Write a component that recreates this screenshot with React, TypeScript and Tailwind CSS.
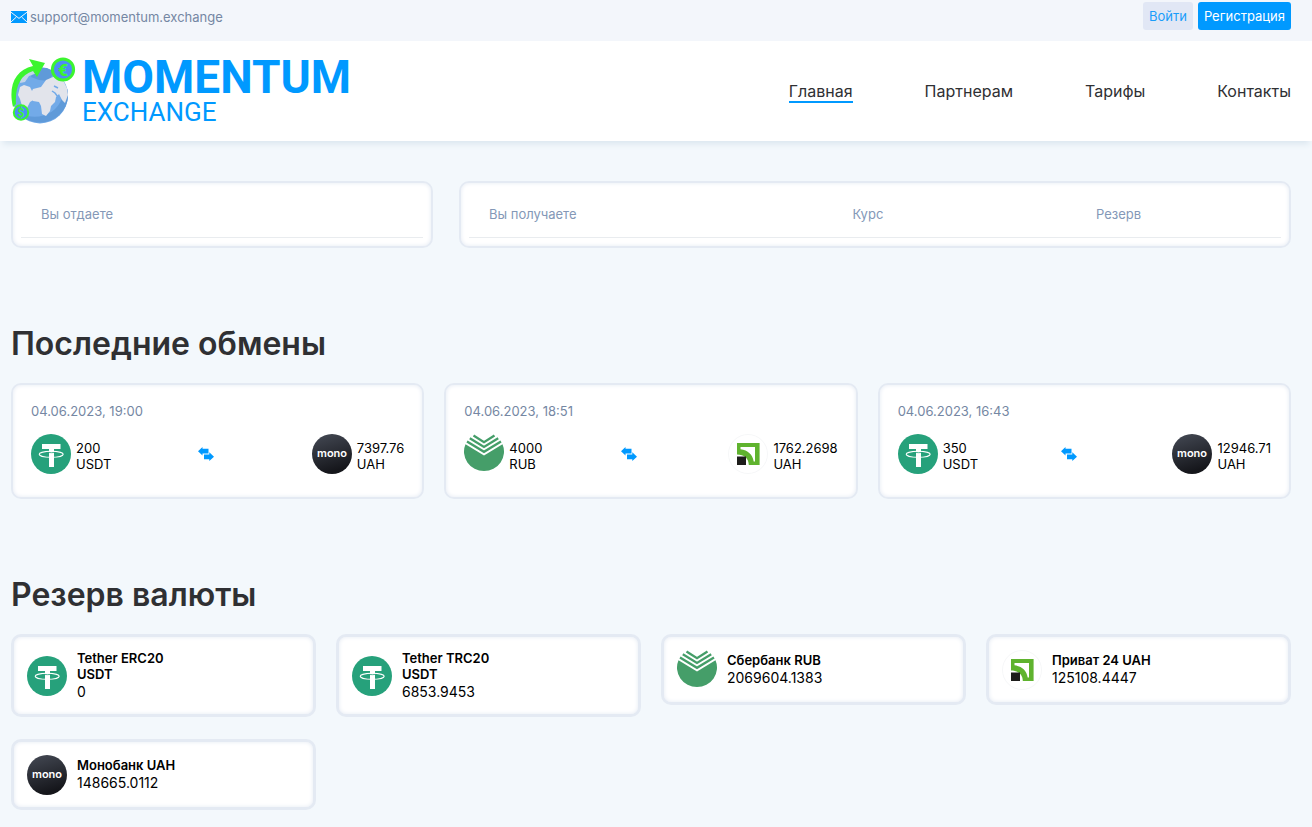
import type { ReactNode } from "react";

type Coin = "tether" | "mono" | "sber" | "privat";

type Exchange = {
    date: string;
    from: { coin: Coin; amount: string; currency: string };
    to: { coin: Coin; amount: string; currency: string };
};

type Reserve = {
    coin: Coin;
    name: string[];
    amount: string;
};

const navLinks = ["Главная", "Партнерам", "Тарифы", "Контакты"];

const exchanges: Exchange[] = [
    {
        date: "04.06.2023, 19:00",
        from: { coin: "tether", amount: "200", currency: "USDT" },
        to: { coin: "mono", amount: "7397.76", currency: "UAH" },
    },
    {
        date: "04.06.2023, 18:51",
        from: { coin: "sber", amount: "4000", currency: "RUB" },
        to: { coin: "privat", amount: "1762.2698", currency: "UAH" },
    },
    {
        date: "04.06.2023, 16:43",
        from: { coin: "tether", amount: "350", currency: "USDT" },
        to: { coin: "mono", amount: "12946.71", currency: "UAH" },
    },
];

const reserves: Reserve[] = [
    { coin: "tether", name: ["Tether ERC20", "USDT"], amount: "0" },
    { coin: "tether", name: ["Tether TRC20", "USDT"], amount: "6853.9453" },
    { coin: "sber", name: ["Сбербанк RUB"], amount: "2069604.1383" },
    { coin: "privat", name: ["Приват 24 UAH"], amount: "125108.4447" },
    { coin: "mono", name: ["Монобанк UAH"], amount: "148665.0112" },
];

function MailIcon() {
    return (
        <svg width="16" height="12" viewBox="0 0 16 12" aria-hidden="true">
            <rect width="16" height="12" fill="#0099ff" />
            <path d="M0 1.2 8 7.4l8-6.2M0 11l5.4-5M16 11l-5.4-5" fill="none" stroke="#f3f6fb" strokeWidth="1" />
        </svg>
    );
}

function ArrowsIcon() {
    return (
        <svg className="mr-3 shrink-0" width="16" height="16" viewBox="0 0 16 16" aria-hidden="true">
            <path d="M0 5.300 4.500 1v1.700h6v4.800h-6v2.100z" fill="#0099ff" />
            <path d="M16 10.700 11.300 6.300v2.200H6v4.700h5.300V15z" fill="#0099ff" />
        </svg>
    );
}

function GlobeLogo() {
    return (
        <svg width="66" height="68" viewBox="0 0 66 68" aria-hidden="true">
            <circle cx="29" cy="38.500" r="28" fill="#72aae8" />
            <path d="M57 36a28 28 0 0 1-49 20c18 9 38 1 43-15 1-6 0-11-2-16 5 2 8 6 8 11z" fill="#5f9ad9" />
            <path d="m24 10 12 1 8 4-7 9-9-1-8-3z" fill="#5f9ad9" />
            <path d="M10 19c4-4 9-7 15-8l1 5-8 3-4 6-5 1z" fill="#c3d4e8" />
            <path d="m9 30 4-2 6 2 2 4 5 3-2 5-5 3-3 6-5-2-2-7-2-4z" fill="#e2e4eb" />
            <path d="m30 30 5-7 7-3 6-2 4 5 4 8 1 7-3 8-3-3-3-6-3 3-1 5-4 4-1 5-4 5-4-2-1-8-2-4-6-1-3-6 3-6z" fill="#e2e4eb" />
            <path d="m41 34 3 2 3 4M43 29l4 2" fill="none" stroke="#72aae8" strokeWidth="1.500" />
            <path d="M2 50C-3 29 4 13 22 9l-4-7 16 4-8 14-4-6C9 18 4 30 5 47z" fill="#3cf52f" />
            <circle cx="52" cy="12.500" r="10.600" fill="#4d8df5" stroke="#3cf52f" strokeWidth="3" />
            <text x="52" y="18.500" textAnchor="middle" fontFamily="Roboto, sans-serif" fontSize="17" fontWeight="900" fill="#3cf52f">€</text>
            <circle cx="10" cy="55.500" r="7.200" fill="#4d8df5" stroke="#3cf52f" strokeWidth="2" />
            <text x="10" y="60" textAnchor="middle" fontFamily="Roboto, sans-serif" fontSize="12" fontWeight="700" fill="#3cf52f">$</text>
        </svg>
    );
}

function CoinIcon({ coin }: { coin: Coin }) {
    const art: Record<Coin, ReactNode> = {
        tether: (
            <>
                <circle cx="20" cy="20" r="20" fill="#26a17b" />
                <path d="M11 10h18.500v5H23v18h-5V15h-7z" fill="#fff" />
                <ellipse cx="20.200" cy="20.300" rx="12" ry="3" fill="none" stroke="#fff" strokeWidth="1.100" />
                <path d="M18 18.500c2 .2 3 .2 5 0" fill="none" stroke="#26a17b" strokeWidth=".8" />
            </>
        ),
        mono: (
            <>
                <defs>
                    <linearGradient id="mono-fill" x1="0" y1="0" x2=".3" y2="1">
                        <stop offset="0" stopColor="#454a55" />
                        <stop offset="1" stopColor="#15161b" />
                    </linearGradient>
                </defs>
                <circle cx="20" cy="20" r="20" fill="url(#mono-fill)" />
                <text x="20" y="23.300" textAnchor="middle" fontFamily="Inter, sans-serif" fontSize="11" fontWeight="600" fill="#fff">mono</text>
            </>
        ),
        sber: (
            <>
                <path d="M1.500 10.200 20 21.500l18.500-11.300A20 19.500 0 1 1 1.500 10.200z" fill="#459e69" />
                <path d="M3 7.400 20 17.800 37 7.400M5.800 4.200 20 13l14.200-8.800M9.500 1.500 20 8.200l10.500-6.700" fill="none" stroke="#459e69" strokeWidth="2.300" />
            </>
        ),
        privat: (
            <>
                <circle cx="20" cy="20" r="19.500" fill="#fff" stroke="#f6f7f8" />
                <path d="M9 9h22.600v22H20.800c0-6.500-4.800-10.500-11.800-10.500z" fill="#5fb32e" />
                <path d="M12.500 13H27v14.500h-1.300C24.600 20.500 20 16.200 12.500 15.200z" fill="#fff" />
                <path d="M9 22.500h9V31H9z" fill="#1d1d1b" />
            </>
        ),
    };

    return (
        <svg className="shrink-0" width="40" height="40" viewBox="0 0 40 40" aria-hidden="true">
            {art[coin]}
        </svg>
    );
}

function Amount({ coin, amount, currency }: Exchange["from"]) {
    return (
        <div className="flex items-center gap-[5px]">
            <CoinIcon coin={coin} />
            <p className="pt-1 text-[13px] leading-4 text-black">
                {amount}
                <br />
                {currency}
            </p>
        </div>
    );
}

export default function App() {
    return (
        <div className="min-h-screen bg-[#f3f8fc] pb-[18px] font-[Inter,sans-serif] text-[#2f3033]">
            <div className="flex h-[41px] items-start justify-between bg-[#f3f6fb] pr-[21px] pl-[11px]">
                <a href="mailto:support@momentum.exchange" className="flex items-center gap-[3px] pt-2 text-[13px] leading-[18px] text-[#7587a3]">
                    <MailIcon />
                    support@momentum.exchange
                </a>
                <div className="flex gap-[5px] pt-[2px] text-[13px]">
                    <button type="button" className="h-7 rounded-[3px] bg-[#e1e7f5] px-[6px] pt-[2px] text-[#1a9dfa]">Войти</button>
                    <button type="button" className="h-7 rounded-[3px] bg-[#0099ff] px-[6px] pt-[2px] text-white">Регистрация</button>
                </div>
            </div>

            <header className="flex h-[100px] items-center justify-between bg-white pr-[21px] pl-[11px] shadow-[0_6px_6px_-3px_#dbe6ef]">
                <a href="#" className="flex items-center gap-[5px] font-[Roboto,sans-serif] text-[#0099ff]">
                    <GlobeLogo />
                    <span className="flex flex-col">
                        <span className="text-[46px] leading-[42px] font-bold">MOMENTUM</span>
                        <span className="text-[26px] leading-[28px]">EXCHANGE</span>
                    </span>
                </a>
                <nav className="flex gap-[72px] text-[16px]">
                    {navLinks.map((link, i) => (
                        <a
                            key={link}
                            href="#"
                            className={`pt-[2px] leading-5 ${i === 0 ? "border-b-2 border-[#0099ff]" : ""}`}
                        >
                            {link}
                        </a>
                    ))}
                </nav>
            </header>

            <main className="pr-[21px] pl-[11px]">
                {/* Exchange directions */}
                <section className="mt-10 grid grid-cols-[422fr_832fr] gap-[26px] text-[13px] text-[#8498b7]">
                    <div className="rounded-[10px] border-2 border-[#e4eaf3] bg-white px-2 pb-2 shadow-[inset_0_0_4px_#e4eaf3]">
                        <table className="w-full table-fixed border-b border-[#e9ecef] text-left">
                            <thead>
                                <tr className="h-[54px]">
                                    <th className="px-5 pt-[10px] font-normal">Вы отдаете</th>
                                </tr>
                            </thead>
                        </table>
                    </div>
                    <div className="rounded-[10px] border-2 border-[#e4eaf3] bg-white px-2 pb-2 shadow-[inset_0_0_4px_#e4eaf3]">
                        <table className="w-full table-fixed border-b border-[#e9ecef] text-left">
                            <thead>
                                <tr className="h-[54px]">
                                    <th className="w-[45%] pt-[10px] pl-5 font-normal">Вы получаете</th>
                                    <th className="w-[30%] pt-[10px] pl-[18px] font-normal">Курс</th>
                                    <th className="pt-[10px] pl-[18px] font-normal">Резерв</th>
                                </tr>
                            </thead>
                        </table>
                    </div>
                </section>

                {/* Latest exchanges */}
                <section className="mt-[76px]">
                    <h2 className="text-[32px] leading-10 font-semibold">Последние обмены</h2>
                    <div className="mt-[19px] grid grid-cols-3 gap-5">
                        {exchanges.map((item) => (
                            <article key={item.date} className="rounded-[10px] border-2 border-[#e4eaf3] bg-white px-[18px] pt-[18px] pb-[23px] shadow-[inset_0_0_4px_#e4eaf3]">
                                <p className="text-[13px] leading-4 text-[#7587a3]">{item.date}</p>
                                <div className="mt-[15px] flex items-center justify-between">
                                    <Amount {...item.from} />
                                    <ArrowsIcon />
                                    <Amount {...item.to} />
                                </div>
                            </article>
                        ))}
                    </div>
                </section>

                {/* Currency reserves */}
                <section className="mt-[76px]">
                    <h2 className="text-[32px] leading-10 font-semibold">Резерв валюты</h2>
                    <div className="mt-[19px] grid grid-cols-4 items-start gap-x-5 gap-y-[22px]">
                        {reserves.map((item) => (
                            <article key={item.name[0]} className="flex items-center gap-[10px] rounded-[10px] border-3 border-[#e4eaf3] bg-white px-[13px] pt-[13px] pb-3 shadow-[inset_0_0_4px_#e4eaf3]">
                                <CoinIcon coin={item.coin} />
                                <div className="text-black">
                                    <h3 className="text-[13px] leading-4 font-semibold">
                                        {item.name.map((line) => (
                                            <span key={line} className="block">{line}</span>
                                        ))}
                                    </h3>
                                    <p className="text-[14px] leading-5">{item.amount}</p>
                                </div>
                            </article>
                        ))}
                    </div>
                </section>
            </main>
        </div>
    );
}
